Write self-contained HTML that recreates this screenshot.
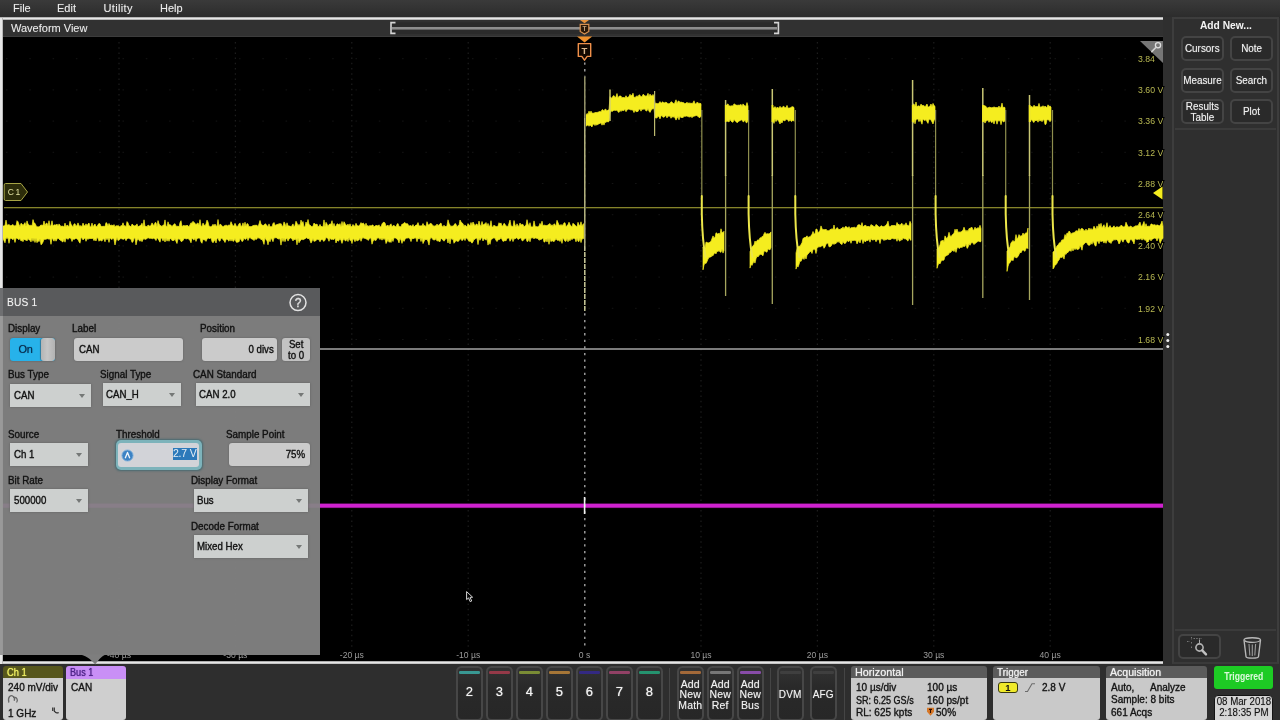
<!DOCTYPE html>
<html lang="en">
<head>
<meta charset="utf-8">
<title>Oscilloscope - Bus 1 CAN setup</title>
<style>
*{box-sizing:border-box;margin:0;padding:0}
html,body{width:1280px;height:720px;overflow:hidden;background:#2e2e2e}
#bottom,#dlg,#side,#menubar,#titlebar{will-change:transform}
body{font-family:"Liberation Sans",Arial,sans-serif;font-size:11px;color:#eee;position:relative}
.abs{position:absolute}
#menubar{left:0;top:0;width:1280px;height:18px;background:linear-gradient(#3a3a3a,#2b2b2b)}
#menubar span{position:absolute;top:1px;font-size:11px;line-height:14px;color:#ececec;text-shadow:0 0 1px rgba(255,255,255,.35)}
#frameTop{left:0;top:17px;width:1163px;height:3px;background:linear-gradient(#8a8a8a,#e6e6e6 35%,#e6e6e6 70%,#777)}
#frameLeft{left:0;top:18px;width:2.6px;height:646px;background:linear-gradient(90deg,#e6e6e6 0,#e6e6e6 72%,#777)}
#frameBot{left:0;top:661px;width:1163px;height:3px;background:linear-gradient(#777,#e6e6e6 35%,#e6e6e6 75%,#8a8a8a)}
#titlebar{left:3px;top:20px;width:1160px;height:17px;background:#313131;border-bottom:1px solid #3c3c3c}
#titlebar .t{position:absolute;left:8px;top:1px;font-size:11px;line-height:14px;color:#eaeaea;text-shadow:0 0 1px rgba(255,255,255,.3)}
#scope{left:3px;top:37px;width:1160px;height:624px;background:#000}
#gap{left:1163px;top:17px;width:10px;height:647px;background:#2f2f2f}
#side{left:1172px;top:17px;width:107px;height:647px;background:#2f2f2f;border:2px solid #3d3d3d;border-bottom-color:#3a3a3a}
.sbtn{position:absolute;width:43px;height:25px;border:2px solid #444;border-radius:5px;background:#2a2a2a;color:#f0f0f0;font-size:11px;line-height:10.5px;text-align:center;display:flex;align-items:center;justify-content:center;text-shadow:0 0 1px rgba(255,255,255,.5)}
.yl{font-size:8.7px;fill:#b8b852;paint-order:stroke;stroke:#000;stroke-width:2px}
.xl{font-size:8.6px;fill:#9c9c9c}

#side .hd{position:absolute;left:0;top:0;width:103px;text-align:center;font-weight:bold;font-size:11px;line-height:13px;top:0px;color:#f4f4f4}
#side .sep{position:absolute;left:1px;width:101px;height:2px;background:#3b3b3b}
/* bottom bar */
.badge{position:absolute;top:666px;height:53.6px;border-radius:3px;overflow:hidden;color:#111;font-size:11px}
.badge .h{height:12px;line-height:12px;padding-left:3.5px;font-size:11px}
.badge .h span{display:inline-block;transform:scaleX(.9);transform-origin:0 50%;text-shadow:0 0 1px currentColor}
.badge .b{position:absolute;left:0;right:0;top:12px;bottom:0;background:#cfcfcf}
.badge .ln{transform-origin:0 0;transform:scaleX(.91);position:absolute;left:4.5px;white-space:nowrap;line-height:12px;color:#161616;text-shadow:0 0 1px rgba(0,0,0,.35)}
.chb{position:absolute;top:666px;width:26.5px;height:54.5px;border:2px solid #474747;border-radius:5.5px;background:linear-gradient(#323232,#292929 40%,#272727);color:#f2f2f2;text-align:center}
.chb i{position:absolute;left:1px;right:1px;top:3px;height:2.6px;border-radius:1.3px;opacity:.78}
.chb b{position:absolute;left:0;right:0;top:16px;font-weight:normal;font-size:13px;line-height:16px;text-shadow:0 0 1px rgba(255,255,255,.8)}
.chb .tx{position:absolute;left:-3px;right:-3px;top:10.5px;font-size:10.5px;line-height:10.8px;letter-spacing:.15px;text-shadow:0 0 1px rgba(255,255,255,.5)}
.chb .t1{position:absolute;left:-3px;right:-3px;top:21px;font-size:10px;line-height:11px;letter-spacing:.2px;text-shadow:0 0 1px rgba(255,255,255,.5)}
.vsep{position:absolute;top:668px;width:1px;height:52px;background:#454545}

#dlg{left:0;top:288px;width:320px;height:367px;background:rgba(132,132,132,.94);color:#111}
#dlg .hdr{position:absolute;left:0;top:0;width:320px;height:28px;background:#595a5c}
#dlg .ttl{transform-origin:0 0;transform:scaleX(.885);position:absolute;left:7px;top:6.6px;letter-spacing:.2px;font-size:11.5px;line-height:14px;color:#f2f2f2;text-shadow:0 0 1px rgba(255,255,255,.4)}
#dlg .lb{position:absolute;font-size:11px;line-height:13px;color:#121212;white-space:nowrap;transform-origin:0 0;transform:scaleX(.895);text-shadow:0 0 1px rgba(0,0,0,.45)}
#dlg .in{position:absolute;height:23px;background:#cbcbcb;border-radius:3px;font-size:11px;line-height:23px;color:#111;white-space:nowrap;box-shadow:0 0 2px rgba(90,90,90,.9);text-shadow:0 0 1px rgba(0,0,0,.4)}
#dlg .sel{position:absolute;height:23px;background:#cdd0cf;font-size:11px;line-height:23px;color:#111;white-space:nowrap;padding-left:3.5px;box-shadow:0 0 2px rgba(90,90,90,.9);text-shadow:0 0 1px rgba(0,0,0,.4)}
#dlg .sel:after{content:"";position:absolute;right:6px;top:9.5px;border:3.2px solid transparent;border-top:4.6px solid #757877;border-bottom:0}

#dlg .c{display:inline-block;transform:scaleX(.88);transform-origin:0 50%}
#dlg .c.r{transform-origin:100% 50%}
#dlg .c.m{transform-origin:50% 50%}
.sbtn span{display:inline-block;transform:scaleX(.9)}
#dlg .lb,#dlg .in,#dlg .sel,.badge .ln{-webkit-text-stroke:.28px #151515}
#bottom{position:absolute;left:0;top:0;width:1280px;height:0}
</style>
</head>
<body>
<div id="menubar" class="abs"><span style="left:13px">File</span><span style="left:57px">Edit</span><span style="left:103.5px;letter-spacing:.35px">Utility</span><span style="left:160px">Help</span></div>
<div id="gap" class="abs"></div>
<div id="titlebar" class="abs"><div class="t">Waveform View</div></div>
<div id="scope" class="abs"></div>
<svg class="abs" style="left:0;top:0" width="1280" height="720" viewBox="0 0 1280 720">
<path d="M119.0,42 V652" stroke="#1d1d1d" stroke-width="1.2" stroke-dasharray="1.5 3.7" fill="none"/>
<path d="M235.4,42 V652" stroke="#1d1d1d" stroke-width="1.2" stroke-dasharray="1.5 3.7" fill="none"/>
<path d="M351.8,42 V652" stroke="#1d1d1d" stroke-width="1.2" stroke-dasharray="1.5 3.7" fill="none"/>
<path d="M468.2,42 V652" stroke="#1d1d1d" stroke-width="1.2" stroke-dasharray="1.5 3.7" fill="none"/>
<path d="M701.0,42 V652" stroke="#1d1d1d" stroke-width="1.2" stroke-dasharray="1.5 3.7" fill="none"/>
<path d="M817.4,42 V652" stroke="#1d1d1d" stroke-width="1.2" stroke-dasharray="1.5 3.7" fill="none"/>
<path d="M933.8,42 V652" stroke="#1d1d1d" stroke-width="1.2" stroke-dasharray="1.5 3.7" fill="none"/>
<path d="M1050.2,42 V652" stroke="#1d1d1d" stroke-width="1.2" stroke-dasharray="1.5 3.7" fill="none"/>
<path d="M6,58.7 H1130" stroke="#151515" stroke-width="1" stroke-dasharray="1.5 21.8" fill="none"/>
<path d="M6,89.9 H1130" stroke="#151515" stroke-width="1" stroke-dasharray="1.5 21.8" fill="none"/>
<path d="M6,121.1 H1130" stroke="#151515" stroke-width="1" stroke-dasharray="1.5 21.8" fill="none"/>
<path d="M6,152.3 H1130" stroke="#151515" stroke-width="1" stroke-dasharray="1.5 21.8" fill="none"/>
<path d="M6,183.5 H1130" stroke="#151515" stroke-width="1" stroke-dasharray="1.5 21.8" fill="none"/>
<path d="M6,214.7 H1130" stroke="#151515" stroke-width="1" stroke-dasharray="1.5 21.8" fill="none"/>
<path d="M6,245.9 H1130" stroke="#151515" stroke-width="1" stroke-dasharray="1.5 21.8" fill="none"/>
<path d="M6,277.1 H1130" stroke="#151515" stroke-width="1" stroke-dasharray="1.5 21.8" fill="none"/>
<path d="M6,308.3 H1130" stroke="#151515" stroke-width="1" stroke-dasharray="1.5 21.8" fill="none"/>
<path d="M6,339.5 H1130" stroke="#151515" stroke-width="1" stroke-dasharray="1.5 21.8" fill="none"/>
<rect x="320" y="348.2" width="843" height="1.6" fill="#9a9a9a"/>
<rect x="4" y="207" width="1159" height="1.3" fill="#86842a"/>
<rect x="3" y="503.8" width="1160" height="3.8" fill="#cf22cf"/>
<rect x="3" y="503.3" width="1160" height="4.8" fill="#cf22cf" opacity=".35"/>
<path fill="#f5ed1f" stroke="#f5ed1f" stroke-width="0.7" stroke-linejoin="round" d="M3,226 4,225.9 5,225.5 6,220.1 7,225.2 8,225 9,224.5 10,225.4 11,225.8 12,225.1 13,224.5 14,226.3 15,225.4 16,226.1 17,220.7 18,221.7 19,224.5 20,226.7 21,223.3 22,224 23,225.5 24,224.1 25,222.6 26,226.4 27,220.9 28,224 29,225.3 30,225.4 31,225.2 32,225.9 33,219.6 34,223.1 35,223.3 36,225.4 37,226.7 38,227 39,226.8 40,225.8 41,225 42,225.2 43,225.6 44,221 45,225.7 46,223.4 47,223.1 48,226.3 49,220.7 50,226.3 51,225.4 52,220.8 53,226.1 54,225.1 55,224.7 56,225.3 57,224 58,226.3 59,223.9 60,225.2 61,226.5 62,226.1 63,226.2 64,227 65,223.1 66,227 67,225 68,225.8 69,226.7 70,221.3 71,224.2 72,225.6 73,226.9 74,224 75,223.7 76,226.2 77,225.4 78,222.9 79,225.5 80,226.4 81,225.5 82,227 83,223.1 84,225.6 85,226.1 86,223.8 87,226 88,224.1 89,223 90,226.7 91,227 92,223.1 93,227 94,225.2 95,224 96,226.5 97,226.8 98,224.5 99,223.6 100,223.8 101,226.2 102,226.8 103,226 104,226.6 105,226.5 106,222.6 107,223.3 108,226.2 109,223.4 110,225.3 111,225.6 112,224.9 113,226.1 114,224.6 115,226.9 116,225.6 117,226.2 118,225.4 119,226.3 120,227.1 121,225.4 122,226.1 123,222.8 124,226.3 125,225.5 126,227 127,221.6 128,222.8 129,225.9 130,225.8 131,227 132,224.1 133,224.8 134,226.1 135,225.8 136,225.6 137,223.9 138,227 139,225.9 140,226 141,225 142,223.2 143,227 144,219.8 145,226.6 146,226.2 147,226.9 148,225 149,225.7 150,226.3 151,225.2 152,222.9 153,224.4 154,225.8 155,222.7 156,222.6 157,226.9 158,220.6 159,223.9 160,225.4 161,225.8 162,226.6 163,225.1 164,225.2 165,219.9 166,226.1 167,226.9 168,221.8 169,224.7 170,224.8 171,225.2 172,226.5 173,225.3 174,224.2 175,223.7 176,226 177,226.5 178,226 179,227 180,222.6 181,220.7 182,226.6 183,225.6 184,225.7 185,225.7 186,225.8 187,225.3 188,225.7 189,226.8 190,224.7 191,222.7 192,223.5 193,221.3 194,222.5 195,223.3 196,224.4 197,223.7 198,222.9 199,225.2 200,219.7 201,226.1 202,226.6 203,223.1 204,224.7 205,226.1 206,223.8 207,220.1 208,221.9 209,226.2 210,226.5 211,226.9 212,226 213,224.3 214,225.7 215,224.1 216,225.8 217,226.6 218,219.5 219,226.5 220,224.2 221,224.6 222,226 223,226.9 224,225.7 225,225.9 226,224.8 227,226.2 228,225.4 229,225 230,225.5 231,221.7 232,224.1 233,225.9 234,226 235,223.3 236,225.4 237,226.7 238,225.7 239,223.9 240,222.9 241,226.6 242,225.9 243,222.9 244,226.7 245,222.2 246,226.5 247,223.6 248,223.9 249,226.7 250,226.4 251,226.8 252,226.3 253,225.6 254,225.4 255,225.3 256,225.3 257,225.3 258,226.5 259,224 260,220.5 261,224.1 262,225.1 263,225.5 264,225.3 265,223.8 266,224.3 267,225.5 268,227 269,223.9 270,226.7 271,226.7 272,226.7 273,223.5 274,222.5 275,225.3 276,225.2 277,224.3 278,224.5 279,223.4 280,224.3 281,223.5 282,226 283,226.5 284,221.9 285,223.7 286,227 287,222.8 288,225.8 289,226.1 290,226 291,226.8 292,225.5 293,223.9 294,227 295,225.3 296,221.2 297,223.1 298,226 299,224.3 300,226 301,220.1 302,223.4 303,221.5 304,227 305,226.8 306,222 307,224.3 308,219.5 309,224.5 310,225.2 311,225.9 312,227 313,225.9 314,223 315,224.2 316,224.6 317,224 318,226.7 319,226.4 320,224.4 321,226.6 322,226.4 323,227.1 324,219.9 325,227 326,222.3 327,224 328,226.6 329,224.6 330,224.1 331,224.2 332,220.7 333,226.5 334,223.4 335,226.6 336,226.3 337,223.9 338,223.9 339,224.9 340,223.6 341,227 342,221.5 343,226.2 344,221.7 345,223.4 346,225.2 347,225.5 348,224.1 349,226.3 350,223.8 351,226.8 352,226.6 353,224.5 354,225.8 355,226.4 356,223.3 357,225.4 358,226 359,226 360,224.6 361,222.6 362,224 363,222.9 364,223.8 365,226.6 366,223.2 367,226.2 368,225.5 369,226.6 370,225.2 371,226.3 372,225.1 373,225 374,226.9 375,226.1 376,225.4 377,225.6 378,226 379,224.8 380,226.9 381,226.8 382,223.9 383,222.6 384,222.2 385,222.9 386,226.3 387,225.8 388,225.1 389,226.7 390,224.9 391,223.8 392,227.1 393,225.6 394,225.5 395,226.3 396,227 397,224.2 398,223.5 399,226.4 400,226.7 401,226.7 402,224 403,224.3 404,222.9 405,222.6 406,224.1 407,223.4 408,224.2 409,226.3 410,225.3 411,226 412,226.2 413,224.5 414,227 415,225.9 416,225.1 417,225.1 418,222.6 419,225.8 420,226.1 421,225.7 422,226 423,223.5 424,226.1 425,225.5 426,226.8 427,221.7 428,224.6 429,225.3 430,223.5 431,223.4 432,224.3 433,225.7 434,226.2 435,225.9 436,225.7 437,224.1 438,225.4 439,225.2 440,223.7 441,223 442,226.3 443,227 444,225.2 445,226.6 446,226.6 447,225.4 448,219.8 449,223.3 450,225.2 451,226.4 452,225.9 453,226.3 454,225.1 455,223.5 456,224.2 457,226.9 458,225.6 459,225.5 460,220 461,221.7 462,223.1 463,223.7 464,226.5 465,224.9 466,226.2 467,226.8 468,223.6 469,225.1 470,225.7 471,222.5 472,225.4 473,222 474,223.9 475,226 476,224.3 477,224 478,226.2 479,221.1 480,224.8 481,226.6 482,221.5 483,225.2 484,224.3 485,223.9 486,222.5 487,226.2 488,223.4 489,226.4 490,225.8 491,220.7 492,227.1 493,227.1 494,225.1 495,226.2 496,226.2 497,227 498,226 499,222.7 500,224.1 501,222.9 502,226.3 503,225.7 504,223.3 505,224.2 506,226 507,226.4 508,226.4 509,223.3 510,220.1 511,225.9 512,226.2 513,226.9 514,220.5 515,224.7 516,226.9 517,223.8 518,225.9 519,226.4 520,223 521,225 522,224.5 523,224.4 524,226.8 525,226 526,225.2 527,219.7 528,224 529,226.1 530,222.7 531,227 532,226.9 533,227 534,220.9 535,225.5 536,226.7 537,226.7 538,226.9 539,226 540,223.4 541,225.2 542,221.2 543,225.9 544,225.2 545,225.2 546,225.7 547,225.5 548,225.1 549,224.2 550,223.6 551,226.2 552,224.7 553,226.4 554,223.8 555,224.5 556,225.7 557,220.3 558,222.6 559,225.1 560,225.5 561,224.4 562,225.4 563,224.9 564,222.9 565,222.8 566,226.7 567,225.6 568,224.8 569,222.2 570,224.6 571,226 572,226.9 573,223.2 574,224.3 575,225.1 576,226.2 577,227 578,222.3 579,225 580,225.8 581,221.8 582,226.4 583,224.2 584,223.7 584,238.2 583,238.7 582,238.8 581,242.6 580,237.9 579,241.5 578,241.3 577,238.3 576,241.8 575,238.7 574,238.1 573,238.5 572,239.7 571,238.6 570,240.8 569,239.6 568,241.8 567,238.4 566,241.2 565,241.3 564,239.4 563,237.8 562,243.4 561,239 560,241.5 559,239.9 558,240.4 557,240.1 556,238.6 555,240.3 554,241.7 553,241.1 552,240.7 551,241.7 550,238.2 549,244.3 548,238.3 547,242 546,238.7 545,241.9 544,242.1 543,237.7 542,238.9 541,239.4 540,239.5 539,240.3 538,238.6 537,238.3 536,238.2 535,237.7 534,238.9 533,237.6 532,238.1 531,237.7 530,241.8 529,238.2 528,241.3 527,241.5 526,238 525,238.6 524,239.2 523,240.8 522,240.7 521,238 520,238 519,239 518,239.4 517,237.7 516,237.9 515,239 514,238.6 513,241.6 512,238 511,239.5 510,241.3 509,238 508,238 507,238.5 506,240.9 505,240.4 504,241 503,241.4 502,239.4 501,237.6 500,239.2 499,239.4 498,239.8 497,241.6 496,240.3 495,238.3 494,237.7 493,238.3 492,239 491,239.4 490,244.3 489,241.5 488,245.1 487,238.3 486,240.2 485,239 484,238.7 483,241 482,237.5 481,238.5 480,240.3 479,238.3 478,244.6 477,238.2 476,238 475,239.3 474,239.3 473,241.8 472,243.2 471,241.9 470,240.8 469,241.5 468,239.4 467,238.6 466,237.7 465,240.6 464,238 463,239.7 462,240.8 461,238.6 460,239.3 459,240.7 458,241.5 457,241.1 456,240.5 455,242 454,243.3 453,238.8 452,239.5 451,238.1 450,243.9 449,238.2 448,243 447,238.6 446,238.2 445,239.8 444,241.2 443,240.2 442,238.7 441,238.4 440,241.7 439,241.3 438,240.6 437,241.1 436,238.2 435,240 434,239.8 433,239.8 432,238.1 431,237.5 430,239 429,245.1 428,241.6 427,239.2 426,239.8 425,239.3 424,241.5 423,243.6 422,237.9 421,241.5 420,237.6 419,239.2 418,238 417,241.7 416,238.1 415,237.8 414,238.4 413,238.7 412,238.3 411,241.6 410,238.8 409,237.9 408,237.8 407,238.2 406,237.9 405,239.4 404,241.4 403,239.4 402,243.4 401,239.9 400,238.6 399,242.9 398,240.2 397,239.1 396,238 395,238 394,237.7 393,241.5 392,239.1 391,242.5 390,241.4 389,242.3 388,239.2 387,241.8 386,243.6 385,238.3 384,239.5 383,238.1 382,240.2 381,238.1 380,239.6 379,238 378,237.8 377,238.3 376,240.5 375,240.3 374,239.6 373,241.3 372,244.2 371,238.3 370,237.8 369,239.6 368,240.4 367,238.8 366,239.2 365,238.2 364,238.3 363,237.6 362,238.5 361,241.3 360,237.8 359,240.1 358,240.2 357,241.1 356,238.9 355,241.7 354,239.2 353,238.8 352,243.6 351,240.1 350,240.4 349,237.6 348,241.6 347,238.8 346,240.9 345,240.7 344,238.6 343,240.1 342,243.4 341,240.4 340,238.6 339,240.6 338,241.2 337,239.9 336,243 335,237.7 334,239.4 333,239.4 332,239.1 331,239.6 330,238 329,241.3 328,238.8 327,237.8 326,237.6 325,240.1 324,241.4 323,240.5 322,239 321,239.9 320,241.8 319,239.6 318,239.7 317,238.9 316,240.7 315,240.9 314,241.4 313,238.4 312,241.2 311,243.1 310,240.4 309,238 308,239 307,237.7 306,237.8 305,239 304,239 303,240.1 302,239.1 301,240.1 300,241 299,242.8 298,238 297,244.8 296,238.4 295,239.9 294,238.9 293,240.9 292,239.1 291,238 290,237.9 289,239.2 288,241.1 287,237.9 286,239 285,241.7 284,238 283,241.5 282,237.6 281,245.1 280,238.8 279,238.7 278,239.1 277,237.9 276,237.7 275,237.8 274,238.1 273,241.7 272,239.5 271,238.2 270,241.8 269,239.5 268,244.8 267,240.4 266,239.7 265,237.5 264,244.4 263,241.4 262,239.3 261,239.7 260,238 259,238.3 258,237.6 257,238.7 256,239.7 255,238.6 254,240.6 253,239.5 252,238.9 251,238.7 250,237.6 249,238 248,240.5 247,237.5 246,239 245,239.4 244,237.7 243,240.9 242,241.6 241,239.5 240,238.6 239,241.9 238,241.8 237,242.6 236,241.8 235,238.5 234,240.8 233,241.4 232,239.1 231,241.1 230,238.7 229,241.2 228,240.3 227,238.8 226,239.7 225,242.5 224,240.5 223,239.8 222,238.2 221,238.2 220,241.2 219,240.8 218,237.9 217,238.4 216,243 215,239.5 214,241.2 213,242.8 212,241.6 211,237.9 210,238.3 209,238.7 208,237.7 207,239.2 206,241.4 205,239.5 204,240.2 203,238.7 202,243.3 201,242 200,238.3 199,237.9 198,238.2 197,238.5 196,241.4 195,238 194,240.1 193,239.3 192,237.9 191,242.8 190,240.6 189,239.5 188,238.4 187,238.8 186,239.1 185,238.3 184,238.6 183,240.4 182,241.4 181,241.4 180,239.3 179,239.1 178,238.8 177,243.5 176,241.4 175,238.6 174,240.5 173,240.4 172,240.5 171,238.4 170,238.7 169,241.3 168,238.9 167,241.2 166,238.1 165,242 164,238.2 163,240.9 162,238.2 161,237.9 160,242.2 159,240.4 158,238.8 157,237.7 156,240.6 155,239.3 154,237.9 153,238.6 152,238.8 151,238 150,238.6 149,238 148,237.8 147,238.4 146,239.2 145,239.4 144,238.5 143,239.4 142,241.7 141,239.6 140,241.3 139,240.2 138,238.4 137,240.7 136,244.9 135,237.7 134,238.6 133,241.8 132,242.4 131,239 130,239 129,238.3 128,238.2 127,238.8 126,240.7 125,238.3 124,239.3 123,239.1 122,239.1 121,238.3 120,239.1 119,239.9 118,240.6 117,237.5 116,240.7 115,245 114,239.5 113,237.8 112,239.6 111,238.9 110,237.7 109,242.4 108,237.8 107,239.8 106,237.8 105,241.8 104,239.1 103,238.7 102,241.1 101,240.5 100,240 99,241.3 98,238.2 97,237.5 96,241 95,239.3 94,240.7 93,238.3 92,238.5 91,238.5 90,238.5 89,238.6 88,239.3 87,238.6 86,241.3 85,237.7 84,238.9 83,239.9 82,237.9 81,237.6 80,243.2 79,241.8 78,239.5 77,239 76,237.9 75,239.1 74,239.3 73,239 72,241.5 71,238.6 70,237.9 69,237.9 68,239.4 67,238.4 66,238 65,242.2 64,238.7 63,241.9 62,241.6 61,240.5 60,239.9 59,239.2 58,238.1 57,239.3 56,241.2 55,238.8 54,241.2 53,239.4 52,238 51,244.3 50,238.7 49,239.3 48,238.7 47,238.7 46,239.3 45,239.3 44,239.3 43,242 42,243.9 41,244.8 40,238.7 39,241.7 38,240.4 37,242.7 36,238.1 35,242.5 34,238.1 33,241.3 32,237.7 31,241.9 30,240 29,239.9 28,238.5 27,241 26,239.7 25,240.2 24,238.8 23,241.7 22,240.2 21,241.1 20,238.4 19,239.7 18,239 17,238 16,238.3 15,242.5 14,238.3 13,239.7 12,238.9 11,238.1 10,238.8 9,243.3 8,237.6 7,238.7 6,237.6 5,242.8 4,240.8 3,238.4Z M586,114.7 587,113.5 588,114.4 589,111.1 590,113.2 591,111.1 592,113.3 593,113 594,113.3 595,112.4 596,112.6 597,112.4 598,112.3 599,111.7 600,111.5 601,111.9 602,109.8 603,109.8 604,110.9 605,109.2 606,109.4 607,110.9 608,110.1 609,109.7 610,96.7 611,98.2 612,97.8 613,96.1 614,95.6 615,97.6 616,96.5 617,93.5 618,97.9 619,96.3 620,96 621,96.1 622,97.9 623,97.3 624,97.7 625,97.7 626,95.7 627,97.5 628,97.3 629,96.5 630,94.3 631,95.7 632,95.3 633,93.2 634,97.6 635,97.4 636,96.8 637,95.7 638,96.9 639,94.8 640,95.3 641,96.8 642,96.7 643,94.4 644,94.8 645,95.9 646,96.3 647,95.8 648,93.3 649,96.7 650,94.1 651,95.8 652,95.9 653,94.4 654,96.6 655,102.9 656,103.5 657,103.3 658,104 659,102.9 660,101.6 661,103.3 662,102.3 663,101.8 664,102.9 665,102.7 666,102 667,103 668,103.7 669,103.8 670,103.4 671,101.8 672,102.1 673,103.3 674,103.9 675,102.2 676,99.8 677,103.4 678,101.2 679,101.1 680,102.4 681,102.1 682,102.3 683,102.8 684,102.7 685,103.8 686,103.3 687,102.2 688,103.5 689,102.8 690,103.4 691,103.1 692,103.6 693,102.9 694,100.8 695,103.8 696,104.1 697,102.2 698,102.9 699,103.4 700,103.3 701,103.7 701,116.3 700,117.5 699,117.5 698,116.4 697,115.5 696,115.4 695,116.1 694,116.1 693,116.5 692,117.7 691,116.3 690,117.1 689,116.8 688,116.6 687,116 686,116.1 685,116.4 684,116 683,117.7 682,117.2 681,117.7 680,116.3 679,119.8 678,116.6 677,118.3 676,120.1 675,117.9 674,116.6 673,117.3 672,116.5 671,118.3 670,115.7 669,116.5 668,115.7 667,117.9 666,115.4 665,116.4 664,117 663,117.3 662,115.4 661,115.9 660,118.9 659,116.7 658,116 657,118.1 656,117.8 655,117.7 654,108.5 653,108.8 652,108.9 651,110.5 650,112.4 649,111.2 648,108.6 647,110.8 646,111 645,109.3 644,108.8 643,109.5 642,109.1 641,111.2 640,109 639,109.2 638,111.5 637,111.5 636,111.7 635,109.9 634,112.6 633,110.3 632,109.7 631,110 630,109.6 629,109.1 628,109.2 627,110 626,111.7 625,109.3 624,110.6 623,110.5 622,110.2 621,111.5 620,110.3 619,112.4 618,111.8 617,110.2 616,110.2 615,110.6 614,110 613,110.9 612,111.5 611,110.8 610,113 609,121.5 608,122 607,121.4 606,122.5 605,122 604,125.1 603,123 602,125.2 601,122.7 600,123.4 599,123.7 598,124.2 597,125.2 596,124.3 595,125.6 594,124 593,124.2 592,127 591,126 590,124.8 589,126.3 588,125.1 587,125.3 586,126.2Z M703,247.1 704,250.6 705,248 706,242.1 707,242.4 708,242.9 709,242.8 710,242.1 711,241.4 712,238.5 713,235.9 714,237.9 715,237.6 716,232.8 717,233.3 718,234.3 719,233 720,234.7 721,228.8 722,232.7 723,232.5 724,231.3 724,250.5 723,253.1 722,249.1 721,252.3 720,251.9 719,250.6 718,251.5 717,251.2 716,253.9 715,252.8 714,253.8 713,255.8 712,255.6 711,257 710,256.9 709,257.6 708,259.1 707,261.6 706,263.5 705,263 704,265 703,269.8Z M726,105.6 727,104.5 728,103.9 729,105.9 730,105.9 731,106.2 732,105.6 733,106.2 734,103.8 735,104.5 736,105.1 737,105.3 738,105.2 739,105.1 740,105.2 741,104.3 742,106.4 743,103.9 744,105 745,106.2 746,106 747,102.6 748,106.3 748,119.9 747,122.7 746,122.6 745,119.8 744,121.6 743,121.8 742,120 741,119.7 740,120.9 739,120.8 738,122.1 737,122.7 736,121.7 735,120.7 734,119.6 733,122.2 732,122 731,121 730,119.6 729,122 728,121.3 727,121.2 726,119.6Z M750,251.6 751,249.6 752,247.2 753,245.7 754,245.1 755,241 756,242.4 757,240.6 758,239.8 759,240.3 760,237.8 761,237.9 762,236.5 763,236.6 764,233.9 765,232.3 766,234.2 767,233.7 768,233.8 769,233.9 770,233.3 771,231.9 771,247.4 770,249.8 769,249.5 768,248.8 767,252.2 766,251.8 765,250.9 764,251.3 763,255.8 762,255 761,254 760,254.6 759,255.6 758,256.9 757,256.3 756,258.7 755,263.1 754,261.3 753,263.1 752,265.4 751,264.4 750,268.1Z M773,108.1 774,107.8 775,106.6 776,108.4 777,107.3 778,107.7 779,108.2 780,106.3 781,108 782,107.7 783,106.4 784,106.4 785,107.7 786,107.8 787,105.4 788,108.3 789,108 790,108 791,107.4 792,106.7 793,106.8 794,107.6 794,121.3 793,119.9 792,121.3 791,121.3 790,119.6 789,121.4 788,120.5 787,119.5 786,118.9 785,120.9 784,120.5 783,120 782,123 781,121.5 780,124 779,121.8 778,120.3 777,119.4 776,121.6 775,118.8 774,123.4 773,120.4Z M796,253 797,248.8 798,246.9 799,245.9 800,246.6 801,244.4 802,242.7 803,238.6 804,237.6 805,237.8 806,237.1 807,235.8 808,237.7 809,236.8 810,236.9 811,235.4 812,234.6 813,231.5 814,234.1 815,233.8 816,229 817,229.3 818,232.4 819,232.3 820,230.3 821,225.9 822,228.4 823,230.1 824,229.2 825,230.1 826,229.1 827,231 828,230.4 829,231.1 830,229.5 831,229.6 832,228.6 833,230 834,225 835,230.2 836,229 837,227.5 838,228.4 839,229.5 840,229.5 841,228.4 842,228.6 843,226.9 844,229.1 845,227.1 846,226.3 847,227.3 848,228.2 849,226.6 850,228.7 851,227.8 852,227.6 853,227.7 854,227.2 855,227.4 856,228.2 857,226.7 858,224.7 859,225 860,224.7 861,226.6 862,222.6 863,227 864,226 865,225.3 866,225.5 867,226.7 868,226.3 869,226.6 870,227.1 871,224.5 872,225.4 873,225.6 874,226.6 875,226.9 876,224.4 877,225.2 878,225.9 879,227.1 880,227.1 881,225.7 882,226.1 883,227 884,226.3 885,226.2 886,224.9 887,224 888,221.2 889,226.4 890,226.8 891,225.9 892,225.3 893,225.8 894,225.2 895,225.8 896,226 897,222.5 898,224.6 899,224.3 900,225.4 901,224 902,223.3 903,226.2 904,224.4 905,225.6 906,222.8 907,225.3 908,225.6 909,226.1 910,221.3 911,223.7 911,240.4 910,239.5 909,238.1 908,241.1 907,240.3 906,238.9 905,238.8 904,238.8 903,237.7 902,240.2 901,239.3 900,241.2 899,240.5 898,237.9 897,241.3 896,238.4 895,239 894,238.8 893,238.8 892,237.9 891,239.4 890,239.4 889,239.7 888,239.1 887,239.1 886,240 885,239.6 884,240.6 883,239.2 882,238.7 881,238.9 880,243.6 879,239.5 878,239.6 877,239.8 876,241.8 875,239.4 874,239.6 873,240 872,239.9 871,238.6 870,242.2 869,239.1 868,240.7 867,240.2 866,241.3 865,241.7 864,240.3 863,243.6 862,239 861,239.4 860,243 859,240.2 858,241.9 857,243.9 856,240.2 855,240.6 854,240.1 853,240.8 852,240.1 851,243.3 850,240.2 849,241.4 848,241.5 847,240.4 846,242.7 845,243.6 844,243.2 843,241.2 842,244.6 841,243.9 840,243.1 839,241.1 838,242.4 837,241.4 836,243.6 835,243.5 834,244.5 833,243.4 832,244.5 831,246.2 830,246.7 829,246.8 828,243 827,243.3 826,244.2 825,246.9 824,248.3 823,245.5 822,245.7 821,246.4 820,247 819,246.6 818,247.2 817,248.2 816,253.5 815,249.4 814,249.1 813,249.6 812,253.5 811,251.2 810,251.6 809,252.9 808,253.9 807,255.1 806,259 805,255.9 804,259.5 803,257.5 802,259.2 801,261.4 800,260.8 799,264.4 798,267.1 797,265.6 796,269.1Z M913,104.2 914,103.9 915,106.4 916,102 917,107.1 918,105.8 919,106.1 920,106.5 921,104.1 922,105.4 923,105.7 924,105.6 925,106.7 926,105.6 927,104 928,107 929,107.1 930,105.9 931,104 932,107.1 933,103.4 934,105.6 935,106.3 935,119 934,120.7 933,124 932,121.9 931,120.2 930,119.2 929,119.2 928,123.4 927,121.8 926,119.5 925,120.7 924,119.8 923,118.9 922,124.2 921,121.7 920,119.3 919,121.7 918,119 917,118.9 916,119.6 915,123.8 914,119 913,123.3Z M937,248.9 938,250.5 939,247.3 940,244.8 941,240.7 942,241.3 943,240 944,242.2 945,235.9 946,237.6 947,238.6 948,236.6 949,232.3 950,235.9 951,236.4 952,235.3 953,234.1 954,233.5 955,229.2 956,231.3 957,229 958,232.4 959,231.9 960,232.3 961,231.9 962,230.9 963,230.5 964,227.2 965,230 966,231.4 967,230.2 968,231.4 969,228.6 970,228.4 971,227.7 972,227.3 973,230.2 974,230.1 975,227.2 976,228.9 977,228.5 978,227.6 979,228.4 980,225.3 981,228.7 981,241.4 980,242 979,241.1 978,241.3 977,242 976,242.8 975,243.6 974,244.6 973,243.3 972,242.2 971,243.4 970,245.3 969,243.6 968,247.5 967,248.4 966,243.4 965,246.4 964,246.3 963,246.3 962,247.7 961,246.8 960,248 959,248.5 958,247 957,248.5 956,252.4 955,249.1 954,251.6 953,250.5 952,250.3 951,252.2 950,252.5 949,253.2 948,255.2 947,254.8 946,256.2 945,256 944,260 943,260.4 942,260 941,261.5 940,263.9 939,263 938,265.1 937,268.3Z M983,106.2 984,106 985,105.6 986,106.6 987,108.2 988,107.7 989,107.4 990,107 991,108 992,107.4 993,107.7 994,106.8 995,107.6 996,107.6 997,107.6 998,107.8 999,106.1 1000,108.2 1001,107 1002,103.1 1003,107.8 1004,107.2 1005,107.6 1005,120.4 1004,121.9 1003,121.6 1002,120.2 1001,124.7 1000,119.8 999,121.3 998,120.3 997,124.2 996,120.3 995,120.2 994,124 993,120.5 992,122.7 991,121.8 990,120.4 989,122.3 988,120 987,120.4 986,121.1 985,123.1 984,120.2 983,120.9Z M1007,251 1008,250.2 1009,248.4 1010,246.8 1011,242.7 1012,241.9 1013,240.4 1014,242 1015,240.7 1016,234.6 1017,239.3 1018,237.6 1019,234.6 1020,236.4 1021,235.7 1022,236 1023,233 1024,234.9 1025,233.4 1026,232.9 1027,232.9 1028,228.1 1028,248.7 1027,247.7 1026,248.4 1025,251.3 1024,250.8 1023,249.8 1022,250.7 1021,252.9 1020,252.2 1019,254.5 1018,256.6 1017,257.4 1016,258 1015,256.6 1014,257.2 1013,260.8 1012,259.8 1011,260.5 1010,262.7 1009,263.3 1008,266.5 1007,271.4Z M1030,107 1031,106.7 1032,106.4 1033,107.5 1034,105.2 1035,106.5 1036,106.9 1037,106.3 1038,107.1 1039,103.4 1040,107.3 1041,107 1042,106.8 1043,105.7 1044,107.4 1045,106 1046,107.1 1047,107.6 1048,104.8 1049,106.5 1050,106.1 1051,107 1051,120.2 1050,121.7 1049,120.1 1048,119.7 1047,119.5 1046,124.2 1045,124.6 1044,119.5 1043,120.1 1042,121.7 1041,120 1040,121.2 1039,119.6 1038,122.2 1037,119.8 1036,121 1035,120 1034,122.5 1033,121.7 1032,119.7 1031,120.1 1030,122Z M1053,252.2 1054,251.1 1055,249.9 1056,248 1057,245.8 1058,245.2 1059,243.3 1060,242.7 1061,241.7 1062,239.7 1063,240.2 1064,239.1 1065,234.5 1066,236.7 1067,232.9 1068,233.7 1069,231.1 1070,232 1071,234.6 1072,232.9 1073,233.2 1074,232.2 1075,232.4 1076,230.6 1077,231.2 1078,231 1079,228.4 1080,231.2 1081,228.8 1082,228.5 1083,229 1084,230.7 1085,230.9 1086,229.1 1087,231.1 1088,230 1089,228 1090,230.2 1091,228.4 1092,230.2 1093,229.1 1094,226.2 1095,228.1 1096,229.5 1097,225.9 1098,228.7 1099,223.8 1100,226.9 1101,223.3 1102,228 1103,226.2 1104,224.7 1105,228.4 1106,226.4 1107,222.7 1108,227.8 1109,227.6 1110,225.6 1111,227.6 1112,228.1 1113,227.1 1114,225.8 1115,227.7 1116,227.3 1117,226.5 1118,227.3 1119,227.1 1120,226.8 1121,225.2 1122,225.8 1123,226.7 1124,227 1125,226.4 1126,222.2 1127,224.5 1128,226.5 1129,227.3 1130,226.4 1131,226 1132,227.4 1133,227.3 1134,226.9 1135,225.8 1136,226.2 1137,225.6 1138,225.9 1139,223.7 1140,222.1 1141,225.9 1142,226.3 1143,224 1144,221.5 1145,226.9 1146,223.7 1147,226.8 1148,226 1149,226.4 1150,226.3 1151,224 1152,224 1153,225.3 1154,224.6 1155,224.9 1156,225.4 1157,225 1158,225 1159,225.9 1160,225.6 1161,223.7 1162,221.1 1163,226.4 1163,238.4 1162,239.1 1161,241.2 1160,243.5 1159,237.8 1158,238.3 1157,241 1156,238.2 1155,238.3 1154,237.9 1153,239 1152,239.1 1151,240.9 1150,238.9 1149,239.8 1148,242.8 1147,242.9 1146,239.6 1145,240.5 1144,239.3 1143,238.5 1142,240.2 1141,238.3 1140,239.6 1139,238.7 1138,239.7 1137,238.9 1136,239.4 1135,238.4 1134,244 1133,241.4 1132,240.6 1131,238.7 1130,240.2 1129,243 1128,242.9 1127,241.7 1126,239.5 1125,239.1 1124,239.7 1123,242.2 1122,240.5 1121,239.1 1120,242.4 1119,244 1118,241 1117,239.8 1116,239.2 1115,240.3 1114,239.2 1113,240.8 1112,240.9 1111,243.5 1110,242 1109,242.4 1108,239.8 1107,240.6 1106,243.3 1105,240.7 1104,243.1 1103,241.1 1102,240.9 1101,241.8 1100,240.6 1099,243.7 1098,241.1 1097,241.1 1096,246.1 1095,245.7 1094,243 1093,241.3 1092,244.3 1091,242.5 1090,245.1 1089,245.3 1088,244.9 1087,242.9 1086,242.4 1085,242.7 1084,244.3 1083,244.6 1082,250.2 1081,247.3 1080,245.5 1079,249 1078,249.2 1077,249.6 1076,248.2 1075,249.7 1074,247.7 1073,250.9 1072,248.3 1071,251.4 1070,250.2 1069,251 1068,252.5 1067,252.4 1066,254.4 1065,253.6 1064,259.1 1063,255.8 1062,257.7 1061,257 1060,257.7 1059,260 1058,260.9 1057,263.3 1056,264.7 1055,264.9 1054,267.6 1053,268.9Z"/>
<path d="M701.8,110 V198" stroke="#8e8e4e" stroke-width="1.2" fill="none"/>
<path d="M701.8,196 V214 C702.2,232 703.2,246 705.7,257" stroke="#ece64a" stroke-width="2" fill="none" stroke-linecap="round"/>
<path d="M725.6,296 V175" stroke="#a6a65e" stroke-width="1.3" fill="none"/>
<path d="M725.6,176 V100" stroke="#c9c774" stroke-width="1.5" fill="none"/>
<path d="M725.8,105 V122" stroke="#f5ed1f" stroke-width="1.8" fill="none"/>
<path d="M748.6,110 V198" stroke="#8e8e4e" stroke-width="1.2" fill="none"/>
<path d="M748.6,196 V214 C749,232 750,246 752.5,257" stroke="#ece64a" stroke-width="2" fill="none" stroke-linecap="round"/>
<path d="M772.3,304 V175" stroke="#a6a65e" stroke-width="1.3" fill="none"/>
<path d="M772.3,176 V89" stroke="#c9c774" stroke-width="1.5" fill="none"/>
<path d="M772.5,105 V122" stroke="#f5ed1f" stroke-width="1.8" fill="none"/>
<path d="M795.3,110 V198" stroke="#8e8e4e" stroke-width="1.2" fill="none"/>
<path d="M795.3,196 V214 C795.7,232 796.7,246 799.2,257" stroke="#ece64a" stroke-width="2" fill="none" stroke-linecap="round"/>
<path d="M912.6,305 V175" stroke="#a6a65e" stroke-width="1.3" fill="none"/>
<path d="M912.6,176 V80" stroke="#c9c774" stroke-width="1.5" fill="none"/>
<path d="M912.8,105 V122" stroke="#f5ed1f" stroke-width="1.8" fill="none"/>
<path d="M935.6,110 V198" stroke="#8e8e4e" stroke-width="1.2" fill="none"/>
<path d="M935.6,196 V214 C936,232 937,246 939.5,257" stroke="#ece64a" stroke-width="2" fill="none" stroke-linecap="round"/>
<path d="M982.8,298 V175" stroke="#a6a65e" stroke-width="1.3" fill="none"/>
<path d="M982.8,176 V88" stroke="#c9c774" stroke-width="1.5" fill="none"/>
<path d="M983,105 V122" stroke="#f5ed1f" stroke-width="1.8" fill="none"/>
<path d="M1005.7,110 V198" stroke="#8e8e4e" stroke-width="1.2" fill="none"/>
<path d="M1005.7,196 V214 C1006.1,232 1007.1,246 1009.6,257" stroke="#ece64a" stroke-width="2" fill="none" stroke-linecap="round"/>
<path d="M1029.5,300 V175" stroke="#a6a65e" stroke-width="1.3" fill="none"/>
<path d="M1029.5,176 V95" stroke="#c9c774" stroke-width="1.5" fill="none"/>
<path d="M1029.7,105 V122" stroke="#f5ed1f" stroke-width="1.8" fill="none"/>
<path d="M1052.5,110 V198" stroke="#8e8e4e" stroke-width="1.2" fill="none"/>
<path d="M1052.5,196 V214 C1052.9,232 1053.9,246 1056.4,257" stroke="#ece64a" stroke-width="2" fill="none" stroke-linecap="round"/>
<path d="M610,89.5 V121" stroke="#d4d270" stroke-width="1.4" fill="none"/>
<path d="M654.6,91 V136" stroke="#bcba70" stroke-width="1.2" fill="none"/>
<path d="M584.8,62.5 V649" stroke="#b0b0b0" stroke-width="1.3" stroke-dasharray="2.3 4.3" fill="none"/>
<path d="M584.8,76.5 V312" stroke="#000" stroke-width="1.8" fill="none"/>
<path d="M584.8,76.5 V118" stroke="#a09e72" stroke-width="1.4" fill="none"/>
<path d="M584.8,118 V246" stroke="#c4c28a" stroke-width="1.4" fill="none"/>
<path d="M584.8,246 V312" stroke="#d6d6a2" stroke-width="1.4" stroke-dasharray="5 1" fill="none"/>
<rect x="583.8" y="497" width="1.6" height="17" fill="#f2f2f2"/>
<text x="1138" y="62.0" class="yl" text-anchor="start">3.84</text>
<text x="1163.2" y="93.2" class="yl" text-anchor="end">3.60 V</text>
<text x="1163.2" y="124.4" class="yl" text-anchor="end">3.36 V</text>
<text x="1163.2" y="155.6" class="yl" text-anchor="end">3.12 V</text>
<text x="1163.2" y="186.8" class="yl" text-anchor="end">2.88 V</text>
<text x="1163.2" y="218.0" class="yl" text-anchor="end">2.64 V</text>
<text x="1163.2" y="249.2" class="yl" text-anchor="end">2.40 V</text>
<text x="1163.2" y="280.4" class="yl" text-anchor="end">2.16 V</text>
<text x="1163.2" y="311.6" class="yl" text-anchor="end">1.92 V</text>
<text x="1163.2" y="342.8" class="yl" text-anchor="end">1.68 V</text>
<text x="119.0" y="658.3" class="xl" text-anchor="middle">-40 µs</text>
<text x="235.4" y="658.3" class="xl" text-anchor="middle">-30 µs</text>
<text x="351.8" y="658.3" class="xl" text-anchor="middle">-20 µs</text>
<text x="468.2" y="658.3" class="xl" text-anchor="middle">-10 µs</text>
<text x="584.6" y="658.3" class="xl" text-anchor="middle">0 s</text>
<text x="701.0" y="658.3" class="xl" text-anchor="middle">10 µs</text>
<text x="817.4" y="658.3" class="xl" text-anchor="middle">20 µs</text>
<text x="933.8" y="658.3" class="xl" text-anchor="middle">30 µs</text>
<text x="1050.2" y="658.3" class="xl" text-anchor="middle">40 µs</text>
<path d="M5.5,183.5 H21 L27.5,192 L21,200.5 H5.5 Q4.2,200.5 4.2,199 V185 Q4.2,183.5 5.5,183.5Z" fill="#2c2c0a" stroke="#a6a444" stroke-width="1"/>
<text x="14.8" y="195.2" text-anchor="middle" font-size="8.5" fill="#e2e2a2" letter-spacing="1.6">C1</text>
<path d="M1153,193 L1162.5,186.5 V199.5Z" fill="#f4ec1e"/>
<path d="M1140,41 H1163 V63Z" fill="#767676"/>
<circle cx="1158" cy="45.2" r="2.6" fill="none" stroke="#e0e0e0" stroke-width="1.3"/><path d="M1156,47.2 L1151.8,51.6" stroke="#d0d0d0" stroke-width="1.6" stroke-linecap="round"/>
<circle cx="1167.8" cy="334.5" r="1.5" fill="#f0f0f0"/>
<circle cx="1167.8" cy="340.5" r="1.5" fill="#f0f0f0"/>
<circle cx="1167.8" cy="346.5" r="1.5" fill="#f0f0f0"/>
<rect x="392" y="22.5" width="385" height="11.5" fill="#2b2b2b"/>
<rect x="392" y="27" width="385" height="2.6" fill="#8e8e8e"/>
<path d="M395.5,22.6 H391 V33.4 H395.5" fill="none" stroke="#d4d4d4" stroke-width="1.6"/>
<path d="M774,22.6 H778.4 V33.4 H774" fill="none" stroke="#d4d4d4" stroke-width="1.6"/>
<path d="M580,20 H589 L584.5,23.2Z" fill="#e8923a"/>
<path d="M580.2,24.4 H588.8 V31.5 L584.5,34 L580.2,31.5Z" fill="#2a1808" stroke="#d89050" stroke-width="1.2"/>
<text x="584.5" y="31.2" text-anchor="middle" font-size="6.5" font-weight="bold" fill="#c8a47c">T</text>
<path d="M577,36.6 H592.2 L584.6,42.6Z" fill="#f0902c"/>
<path d="M578.3,43.6 H590.7 V56.4 H587.2 L584.5,60.2 L581.8,56.4 H578.3Z" fill="#120800" stroke="#f0904a" stroke-width="1.4" stroke-linejoin="round"/>
<text x="584.5" y="54" text-anchor="middle" font-size="9.5" font-weight="bold" fill="#dcb88c">T</text>
<path d="M466.6,591.6 V599.6 L468.6,597.9 L470.2,601.7 L471.7,601 L470.1,597.4 L472.6,597.2Z" fill="#050505" stroke="#d6d6d6" stroke-width="1" stroke-linejoin="round"/>
</svg>
<div id="frameTop" class="abs"></div>
<div id="frameBot" class="abs"></div>
<div id="frameLeft" class="abs"></div>
<div id="dlg" class="abs">
<div class="hdr"></div><div style="position:absolute;left:0;top:0;width:2.5px;height:367px;background:rgba(255,255,255,.13)"></div><div class="ttl">BUS 1</div>
<svg style="position:absolute;left:288px;top:5px" width="20" height="20" viewBox="0 0 20 20"><circle cx="10" cy="9.6" r="8" fill="none" stroke="#e2e2e2" stroke-width="1.5"/><text x="10" y="14" text-anchor="middle" font-size="12" fill="#e2e2e2" stroke="#e2e2e2" stroke-width=".3">?</text></svg>
<div class="lb" style="left:7.5px;top:34px">Display</div>
<div class="lb" style="left:72px;top:34px">Label</div>
<div class="lb" style="left:199.5px;top:34px">Position</div>
<div style="position:absolute;left:10px;top:49.5px;width:45px;height:23px;border-radius:3px;background:#27b2ea;overflow:hidden;box-shadow:0 0 2px rgba(80,80,80,.9)"><div style="position:absolute;left:0;top:0;width:31px;height:23px;text-align:center;line-height:23px;font-size:11px;letter-spacing:-.3px;color:#062a4a;text-shadow:0 0 1px rgba(0,30,70,.6)">On</div><div style="position:absolute;left:31px;top:0;width:14px;height:23px;border-radius:3px;background:linear-gradient(90deg,#b4b4b4,#c6c6c6 45%,#b2b2b2);box-shadow:-1px 0 1px rgba(60,90,110,.6)"></div></div>
<div class="in" style="left:74px;top:50px;width:108.5px;padding-left:4.5px"><span class="c">CAN</span></div>
<div class="in" style="left:202px;top:50px;width:75px;text-align:right;padding-right:3.5px"><span class="c r">0 divs</span></div>
<div class="in" style="left:282px;top:49.5px;width:28px;height:23.5px;text-align:center;line-height:10.5px;padding-top:1.5px;background:#c2c2c2"><span class="c m">Set<br>to 0</span></div>
<div class="lb" style="left:7.5px;top:80px">Bus Type</div>
<div class="lb" style="left:100px;top:79.5px">Signal Type</div>
<div class="lb" style="left:193px;top:79.5px">CAN Standard</div>
<div class="sel" style="left:10px;top:96px;width:81px"><span class="c">CAN</span></div>
<div class="sel" style="left:102.5px;top:95px;width:78px"><span class="c">CAN_H</span></div>
<div class="sel" style="left:195.5px;top:95px;width:114.5px"><span class="c">CAN 2.0</span></div>
<div class="lb" style="left:7.5px;top:139.5px">Source</div>
<div class="lb" style="left:116px;top:139.5px">Threshold</div>
<div class="lb" style="left:226px;top:139.5px">Sample Point</div>
<div class="sel" style="left:10px;top:155px;width:78px"><span class="c">Ch 1</span></div>
<div style="position:absolute;left:115.5px;top:152px;width:86px;height:29.5px;border-radius:5px;background:#7db3bb;box-shadow:0 0 2px 0.5px rgba(70,105,112,.95)"></div>
<div class="in" style="left:118px;top:154.5px;width:81px;height:24.5px;background:#d2d3d8;box-shadow:none"></div>
<svg style="position:absolute;left:121px;top:160.5px" width="13" height="13" viewBox="0 0 13 13"><circle cx="6.5" cy="6.5" r="5.6" fill="#3c82c4" stroke="#86b4dc" stroke-width=".9"/><path d="M4.2,9.2 L6.5,3.4 L8.8,9.2" stroke="#f2f6fa" stroke-width="1.3" fill="none" stroke-linejoin="round"/></svg>
<div style="position:absolute;left:172.5px;top:160px;width:24.5px;height:11.5px;background:#2c79ba;color:#e4eef6;font-size:10.5px;line-height:11.5px;text-align:center;letter-spacing:-.2px;white-space:nowrap">2.7 V</div>
<div class="in" style="left:228.5px;top:155px;width:81.5px;text-align:right;padding-right:4.5px"><span class="c r">75%</span></div>
<div class="lb" style="left:7.5px;top:185.5px">Bit Rate</div>
<div class="lb" style="left:191px;top:185.5px">Display Format</div>
<div class="sel" style="left:10px;top:201px;width:78px"><span class="c">500000</span></div>
<div class="sel" style="left:193.5px;top:201px;width:114.5px"><span class="c">Bus</span></div>
<div class="lb" style="left:191px;top:231.5px">Decode Format</div>
<div class="sel" style="left:193.5px;top:247px;width:114.5px"><span class="c">Mixed Hex</span></div>
</div>
<svg class="abs" style="left:76px;top:654px" width="38" height="12" viewBox="0 0 38 12"><path d="M4,0.6 H30 C25,2.5 22,7 19.2,10.6 C16,7 12,2.5 4,0.6Z" fill="#7e7e7e"/></svg>
<div id="side" class="abs">
<div class="hd" style="top:-.5px"><span style="display:inline-block;transform:scaleX(.93)">Add New...</span></div>
<div class="sbtn" style="left:7px;top:17px"><span>Cursors</span></div>
<div class="sbtn" style="left:56px;top:17px"><span>Note</span></div>
<div class="sbtn" style="left:7px;top:49px"><span>Measure</span></div>
<div class="sbtn" style="left:56px;top:49px"><span>Search</span></div>
<div class="sbtn" style="left:7px;top:80px"><span>Results<br>Table</span></div>
<div class="sbtn" style="left:56px;top:80px"><span>Plot</span></div>
<div class="sep" style="top:109px"></div>
<div class="sep" style="top:610px"></div>
<div class="sbtn" style="left:4px;top:615px"></div>
<svg style="position:absolute;left:0;top:610px" width="103" height="40" viewBox="0 0 103 40">
<g fill="none" stroke="#777" stroke-width="1"><path d="M17.5,8 V11 M17.5,13 V15 M17.5,17.5 V20 M13,12.5 H16 M19.5,9.5 H28" stroke-dasharray="1.5 1.2"/></g>
<circle cx="25.5" cy="18.5" r="3.6" fill="none" stroke="#b4b4b4" stroke-width="1.6"/><path d="M28.2,21.4 L32,25.4" stroke="#c2c2c2" stroke-width="2.4" stroke-linecap="round"/><path d="M25.5,10.5 V15" stroke="#aaa" stroke-width="1"/>
<g fill="none" stroke="#b8b8b8" stroke-width="1.4" stroke-linejoin="round"><path d="M70,11 C70,8 86.5,8 86.5,11 L84.5,27.5 C84.5,29.6 72,29.6 72,27.5Z"/><path d="M70.5,11.5 C73,14 84,14 86,11.5" stroke-width="1.2"/><path d="M75,15 L75.8,26.5 M78.3,15.5 V27 M81.6,15 L80.8,26.5" stroke-width="1.1" stroke="#9a9a9a"/></g>
</svg>
</div>
<div id="bottom">
<div class="badge" style="left:3px;width:60px"><div class="h" style="background:#56561c;color:#eeee62"><span style="transform:scaleX(.85)">Ch 1</span></div><div class="b"></div>
<div class="ln" style="top:15px">240 mV/div</div><div class="ln" style="top:40.5px">1 GHz</div>
<svg style="position:absolute;left:0;top:0" width="60" height="54" viewBox="0 0 60 54"><path d="M5.8,36 C4.5,30.5 8,28.8 10,30.2 C11.5,31.2 11.8,33 11.3,34.3 M10.6,31.6 C13.5,30.8 15.3,33.5 13.8,36" fill="none" stroke="#686868" stroke-width="1.3" stroke-linecap="round"/><path d="M49.7,41.4 V45 M51.3,41.4 V45.2 L53.2,46.9" fill="none" stroke="#2a2a2a" stroke-width="1.1"/><path d="M52.6,46.2 H56 L55.4,47.6 H53.4Z" fill="#2a2a2a"/></svg></div>
<div class="badge" style="left:66px;width:60px"><div class="h" style="background:#c98ff6;color:#4e2488;height:13px"><span style="transform:scaleX(.83)">Bus 1</span></div><div class="b" style="top:13px"></div><div class="ln" style="top:15.3px">CAN</div></div>
<div class="chb" style="left:456px"><i style="background:#3cb6b0"></i><b>2</b></div>
<div class="chb" style="left:486px"><i style="background:#b23c50"></i><b>3</b></div>
<div class="chb" style="left:516px"><i style="background:#8fa637"></i><b>4</b></div>
<div class="chb" style="left:546px"><i style="background:#c88a3a"></i><b>5</b></div>
<div class="chb" style="left:576px"><i style="background:#35289a"></i><b>6</b></div>
<div class="chb" style="left:606px"><i style="background:#ae4676"></i><b>7</b></div>
<div class="chb" style="left:636px"><i style="background:#22b082"></i><b>8</b></div>
<div class="vsep" style="left:669px"></div>
<div class="chb" style="left:677px"><i style="background:#c47a3c"></i><div class="tx">Add<br>New<br>Math</div></div>
<div class="chb" style="left:707px"><i style="background:#8c8c8c"></i><div class="tx">Add<br>New<br>Ref</div></div>
<div class="chb" style="left:737px"><i style="background:#a254cc"></i><div class="tx">Add<br>New<br>Bus</div></div>
<div class="vsep" style="left:770px"></div>
<div class="chb" style="left:777px"><i style="background:#444"></i><div class="t1">DVM</div></div>
<div class="chb" style="left:810px"><i style="background:#444"></i><div class="t1">AFG</div></div>
<div class="vsep" style="left:844px"></div>
<div class="badge" style="left:851px;width:136px"><div class="h" style="background:#5b5b5b;color:#f0f0f0"><span style="transform:scaleX(.98)">Horizontal</span></div><div class="b" style="background:#c9c9c9"></div>
<div class="ln" style="top:14.5px">10 µs/div</div><div class="ln" style="top:27.6px;transform:scaleX(.82)">SR: 6.25 GS/s</div><div class="ln" style="top:40px">RL: 625 kpts</div>
<div class="ln" style="top:14.5px;left:76px">100 µs</div><div class="ln" style="top:27.6px;left:76px">160 ps/pt</div><div class="ln" style="top:40px;left:85px">50%</div>
<svg style="position:absolute;left:75px;top:41px" width="9" height="10" viewBox="0 0 9 10"><path d="M1,0.8 H8 V4.8 L4.5,8.8 L1,4.8Z" fill="#d87828"/><path d="M3,2.4 H6 M4.5,2.4 V6" stroke="#301000" stroke-width="1.1" fill="none"/></svg></div>
<div class="badge" style="left:993px;width:107px"><div class="h" style="background:#5b5b5b;color:#f0f0f0"><span>Trigger</span></div><div class="b" style="background:#c9c9c9"></div>
<div style="position:absolute;left:5px;top:16px;width:20px;height:11px;border:1px solid #3a3a10;border-radius:3px;background:#f0ea2a;color:#111;font-size:9.5px;line-height:9px;text-align:center;font-weight:bold">1</div>
<svg style="position:absolute;left:30px;top:16px" width="14" height="11" viewBox="0 0 14 11"><path d="M2,9.5 H4.5 L9,1.8 H12" stroke="#6c6c6c" stroke-width="1.1" fill="none"/></svg>
<div class="ln" style="top:15px;left:49px">2.8 V</div></div>
<div class="badge" style="left:1106px;width:101px"><div class="h" style="background:#5b5b5b;color:#f0f0f0"><span style="transform:scaleX(.96)">Acquisition</span></div><div class="b" style="background:#c9c9c9"></div>
<div class="ln" style="top:14.5px">Auto,</div><div class="ln" style="top:14.5px;left:44px">Analyze</div><div class="ln" style="top:27px">Sample: 8 bits</div><div class="ln" style="top:39.5px">661 Acqs</div></div>
<div class="abs" style="left:1214px;top:666px;width:59px;height:23px;border-radius:3px;background:#1dcb24;color:#dcfadc;font-size:10px;font-weight:bold;line-height:22.5px;text-align:center"><span style="display:inline-block;transform:scaleX(.86)">Triggered</span></div>
<div class="abs" style="left:1214px;top:694.5px;width:59px;height:30px;border-radius:4px;background:#d6d6d6;border:1.5px solid #141414;color:#111;font-size:11px;line-height:11px;text-align:center;white-space:nowrap;text-shadow:0 0 1px rgba(0,0,0,.35)"><span style="display:inline-block;transform:scaleX(.88);margin:0 -10px">08 Mar 2018<br>2:18:35 PM</span></div>
</div>
</body>
</html>
